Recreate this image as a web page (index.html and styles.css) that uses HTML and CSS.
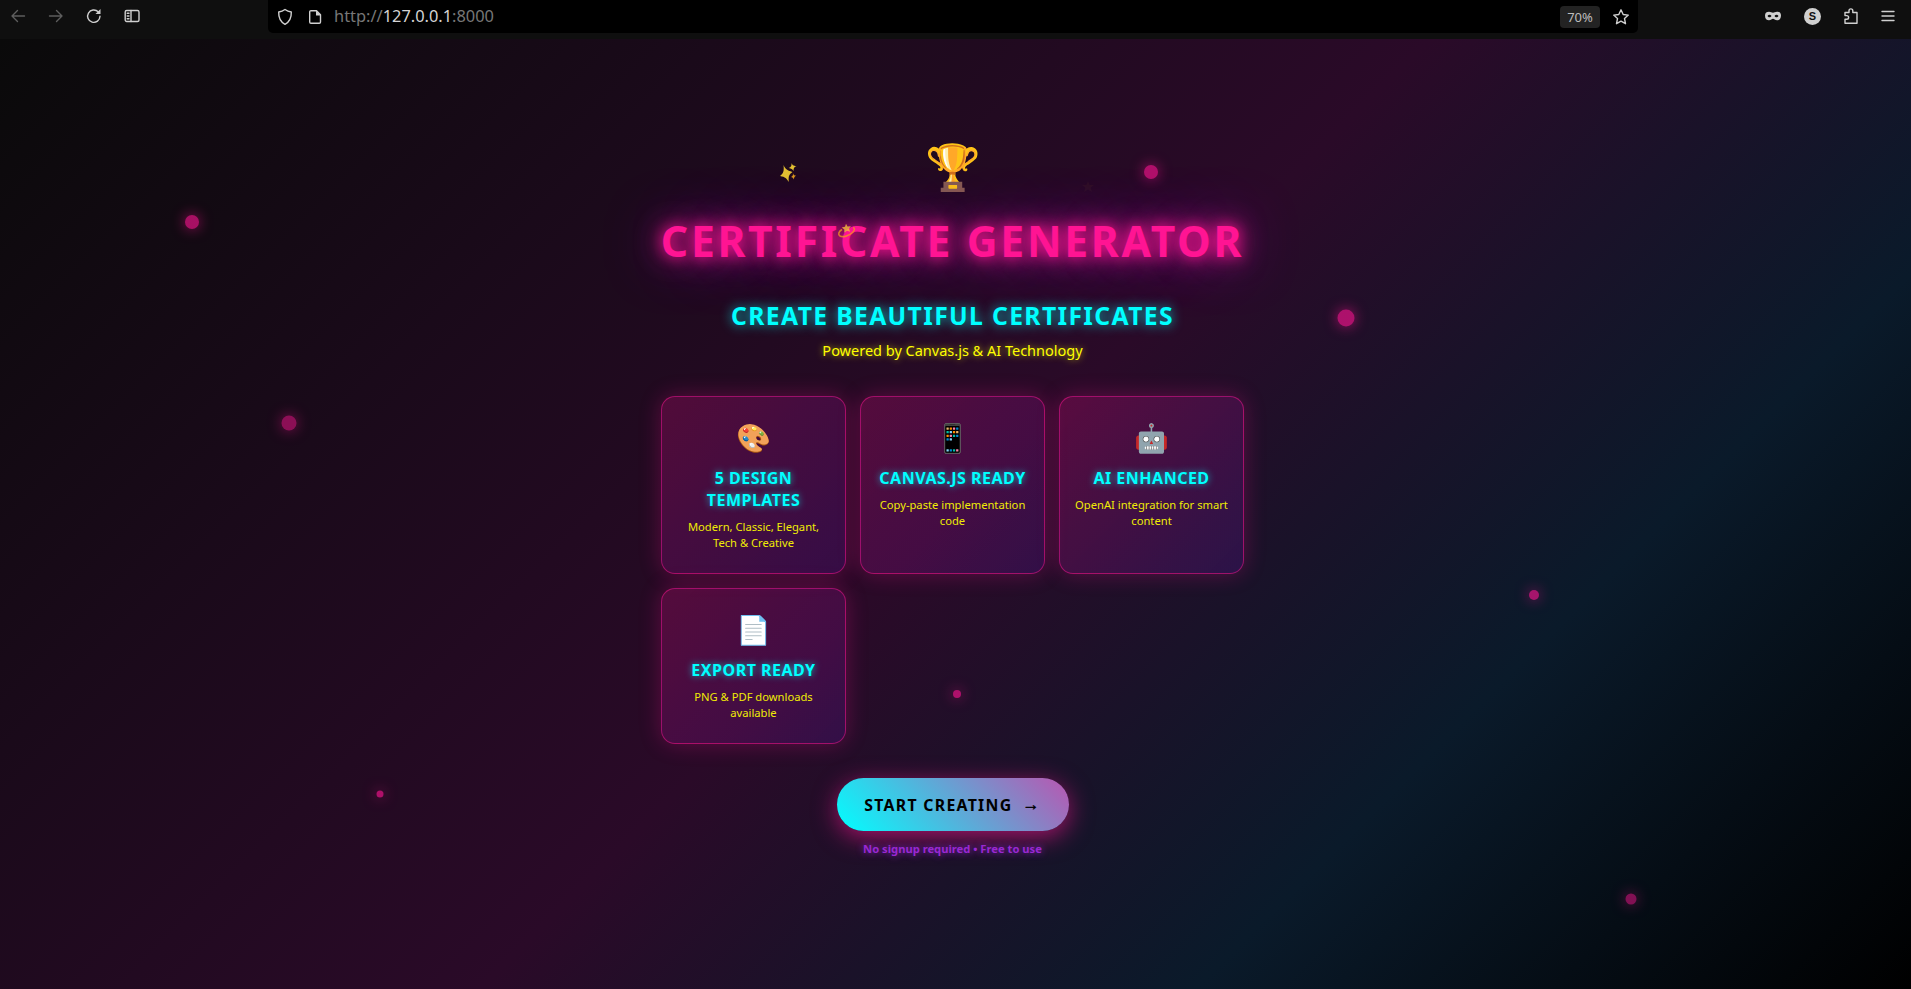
FILE: index.html
```html
<!DOCTYPE html>
<html lang="en">
<head>
<meta charset="utf-8">
<title>Certificate Generator</title>
<link rel="stylesheet" href="styles.css">
</head>
<body>
<header class="toolbar">
  <div class="nav">
    <svg class="dim" width="16" height="16" viewBox="0 0 16 16"><path d="M14.500 8H2M7.500 2.500L2 8l5.500 5.500"/></svg>
    <svg class="dim" width="16" height="16" viewBox="0 0 16 16"><path d="M1.500 8H14M8.500 2.500L14 8l-5.500 5.500"/></svg>
    <svg width="16" height="16" viewBox="0 0 16 16"><path d="M14 8.300A6.200 6.200 0 1 1 12.200 3.800"/><path class="solid" d="M14.500 1v5h-5z"/></svg>
    <svg width="16" height="16" viewBox="0 0 16 16"><rect x="1.200" y="2.500" width="13.800" height="11" rx="1.500"/><path d="M7 2.500v11M3.200 5.200h1.800M3.200 8h1.800M3.200 10.800h1.800"/></svg>
  </div>
  <div class="urlbar">
    <svg width="16" height="18" viewBox="0 0 16 18"><path d="M8 1.500C6.300 2.800 4.200 3.700 1.700 4c-.2 5.500 1.600 9.800 6.300 12.300C12.700 13.800 14.500 9.500 14.300 4 11.800 3.700 9.700 2.800 8 1.500z"/></svg>
    <svg width="16" height="16" viewBox="0 0 16 16"><path d="M4 1.700h5.500l4 4V13a1.300 1.300 0 0 1-1.300 1.300H4A1.300 1.300 0 0 1 2.700 13V3A1.300 1.300 0 0 1 4 1.700z"/><path class="solid" d="M9 1.500l5 5H9z"/></svg>
    <span class="url">http://<b>127.0.0.1</b>:8000</span>
    <span class="zoom">70%</span>
    <svg width="18" height="18" viewBox="0 0 18 18"><path d="M9 1.800l2.200 4.700 5.100.6-3.800 3.500 1 5.100L9 13.200l-4.500 2.500 1-5.100L1.700 7.100l5.100-.6z"/></svg>
  </div>
  <div class="tools">
    <svg width="18" height="16" viewBox="0 0 18 16"><path class="fill" fill-rule="evenodd" d="M1 7.500C1 4.600 2.800 3.700 5 3.700c1.800 0 2.700 1 4 1s2.200-1 4-1c2.200 0 4 .9 4 3.800 0 3.300-1.700 4.800-4 4.800-2 0-2.800-1.500-4-1.500s-2 1.500-4 1.500c-2.300 0-4-1.500-4-4.800zM3.500 8c1 1.800 3 1.800 4 0-1-1.800-3-1.800-4 0zM10.500 8c1 1.800 3 1.800 4 0-1-1.800-3-1.800-4 0z"/></svg>
    <span class="account">S</span>
    <svg width="16" height="18" viewBox="0 0 16 18"><path d="M2 16.200v-4h1.800a1.800 1.800 0 0 0 0-3.600H2V5.500h4V3.800a1.900 1.900 0 0 1 3.800 0v1.700H14v10.700z"/></svg>
    <svg width="14" height="14" viewBox="0 0 14 14"><path d="M1 2.500h12M1 7h12M1 11.500h12"/></svg>
  </div>
</header>
<main class="page">
  <i class="dot d1"></i><i class="dot d2"></i><i class="dot d3"></i><i class="dot d4"></i>
  <i class="dot d5"></i><i class="dot d6"></i><i class="dot d7"></i><i class="dot d8"></i>
  <div class="hero">
    <div class="trophy">🏆</div>
    <h1>CERTIFICATE GENERATOR</h1>
    <h2>CREATE BEAUTIFUL CERTIFICATES</h2>
    <p class="powered">Powered by Canvas.js &amp; AI Technology</p>
    <section class="cards">
      <article class="card"><div class="icon">🎨</div><h3>5 DESIGN TEMPLATES</h3><p>Modern, Classic, Elegant, Tech &amp; Creative</p></article>
      <article class="card"><div class="icon">📱</div><h3>CANVAS.JS READY</h3><p>Copy-paste implementation code</p></article>
      <article class="card"><div class="icon">🤖</div><h3>AI ENHANCED</h3><p>OpenAI integration for smart content</p></article>
      <article class="card"><div class="icon">📄</div><h3>EXPORT READY</h3><p>PNG &amp; PDF downloads available</p></article>
    </section>
    <button class="start"><span>START CREATING</span><span class="arrow">→</span></button>
    <p class="note">No signup required • Free to use</p>
  </div>
  <svg class="spark s1" width="17" height="20" viewBox="0 0 17 20">
    <path fill="#fdd835" d="M3.500 2C5.500 6 6.500 7.300 12.500 9 9 11.500 8.300 13 8.800 19 6.500 15.500 5.500 14 0 13 3.500 10.500 4.200 8 3.500 2z"/>
    <path fill="#fdd835" d="M11.500 0c.8 2.200 1.700 2.800 5 3-2.300 1-2.900 1.900-3 5C12.300 6.200 11.500 5.500 8.700 5 11 4 11.700 3 11.500 0z"/>
    <path fill="#f4a81d" d="M13 10.200c.5 1.600 1 2.200 3.200 2.500-1.600.7-2.200 1.600-2.300 3.900-.7-1.700-1.300-2.300-3-2.500C12.600 13.300 13 12.400 13 10.200z"/>
  </svg>
  <svg class="spark s2" width="20" height="16" viewBox="0 0 20 16">
    <path fill="none" stroke="#f59a1c" stroke-width="1.600" d="M5 6.500C1.500 8.500.8 11.500 3 13c3 1.700 9-.2 12.500-3.500 2.500-2.500 2.500-4.500.5-5"/>
    <path fill="#fdc83a" d="M9 .8l1.500 2.600 3.400-.2-2 2.600 1.400 3-3.300-1-2.700 2v-3.400L4.700 4.500l3.300-.7z"/>
  </svg>
  <svg class="spark s3" width="12" height="12" viewBox="0 0 12 12"><path fill="#fdd835" d="M6 0l1.700 4H12L8.600 6.700 10 11 6 8.500 2 11l1.400-4.300L0 4h4.300z"/></svg>
</main>
</body>
</html>
```
FILE: styles.css
```css
* { box-sizing: border-box; margin: 0; padding: 0; }
body {
  height: 989px;
  display: flex;
  flex-direction: column;
  overflow: hidden;
  background: #000;
  font-family: "Noto Sans", sans-serif;
}
.toolbar svg { fill: none; stroke: #d0d0d0; stroke-width: 1.4; stroke-linecap: round; stroke-linejoin: round; flex: none; }
.toolbar svg.dim { stroke: #5e5e5e; }
.toolbar svg .solid, .toolbar svg .fill { fill: #d0d0d0; stroke: none; }

/* browser toolbar */
.toolbar { height: 39px; flex: none; display: flex; background: #0f0f0f; }
.nav { width: 268px; height: 32px; padding-left: 10px; display: flex; align-items: center; gap: 22px; }
.urlbar {
  width: 1370px; height: 33px; padding: 0 8px 0 9px;
  display: flex; align-items: center; gap: 14px;
  background: #000; border-radius: 0 0 5px 5px;
}
.url { flex: 1; font-size: 16.4px; line-height: 31px; height: 33px; color: #777; margin-left: -3px; }
.url b { font-weight: 400; color: #d4d4d4; }
.zoom { width: 40px; height: 22px; line-height: 22px; border-radius: 4px; text-align: center; font-size: 13px; color: #bdbdbd; background: #232323; margin-right: -2px; }
.tools { flex: 1; height: 32px; padding-right: 16px; display: flex; align-items: center; justify-content: flex-end; gap: 22px; }
.account { width: 17px; height: 17px; border-radius: 50%; background: #d0d0d0; color: #111; font: bold 11px/17px "Liberation Sans", sans-serif; text-align: center; }

/* landing page */
.page {
  position: relative;
  height: 950px;
  padding-right: 6px;
  display: flex;
  justify-content: center;
  background: linear-gradient(135deg, #0a0a0a 0%, #1a0a1a 25%, #2a0a28 50%, #0a1a2a 75%, #000 100%);
}
.hero { width: 583px; display: flex; flex-direction: column; align-items: center; text-align: center; }
.trophy { margin-top: 95px; font-size: 44.8px; line-height: 64px; }
h1 {
  margin-top: 12px;
  font-size: 42.700px; line-height: 62px; letter-spacing: 2.65px; font-weight: 700; white-space: nowrap;
  color: #ff1493;
  text-shadow: 0 0 14px #ff1493, 0 0 28px #ff1493, 0 0 56px rgba(148, 40, 200, .9);
}
h2 {
  margin-top: 27px;
  font-size: 24.7px; line-height: 34px; letter-spacing: 1.35px; font-weight: 700; white-space: nowrap;
  color: #0ff;
  text-shadow: 0 0 12px rgba(0, 255, 255, .8);
}
.powered { margin-top: 5px; font-size: 14.5px; line-height: 24px; color: #ff0; text-shadow: 0 0 7px rgba(255, 255, 0, .7); }
.cards { width: 583px; margin-top: 34px; display: grid; grid-template-columns: repeat(3, 1fr); gap: 14px; }
.card {
  padding: 21px 15px 22px;
  border: 1px solid rgba(255, 20, 147, .5);
  border-radius: 14px;
  background: linear-gradient(135deg, rgba(255, 20, 147, .22), rgba(95, 25, 170, .24));
  box-shadow: 0 0 21px rgba(255, 20, 147, .27);
}
.icon { font-size: 28px; line-height: 38px; }
.card h3 { margin-top: 11px; font-size: 16px; line-height: 22px; letter-spacing: .5px; color: #0ff; text-shadow: 0 0 7px rgba(0, 255, 255, .7); }
.card p { margin-top: 8px; font-size: 11.2px; line-height: 16px; color: #ff0; opacity: .92; }
.start {
  width: 232px; height: 53px; margin-top: 34px;
  border: 0; border-radius: 27px;
  display: flex; align-items: center; justify-content: center; gap: 10px;
  font: bold 15.8px "Noto Sans", sans-serif; letter-spacing: 1.3px; color: #000;
  background: linear-gradient(45deg, #0ff, #ba55b0);
  box-shadow: 0 6px 24px rgba(255, 20, 147, .6);
}
.arrow { font-size: 17px; line-height: 20px; padding-bottom: 1px; -webkit-text-stroke: .4px #000; }
.note { margin-top: 10px; font-size: 11.2px; line-height: 16px; font-weight: 700; color: #9a28d2; text-shadow: 0 0 7px rgba(138, 43, 226, .8); }

/* floating decorations */
.dot { position: absolute; transform: translate(-50%, -50%); border-radius: 50%; background: #ff1493; box-shadow: 0 0 14px #ff1493; opacity: .63; }
.d1 { left: 192px; top: 183px; width: 14px; height: 14px; }
.d2 { left: 288.500px; top: 384px; width: 15px; height: 15px; opacity: .5; }
.d3 { left: 1151px; top: 133px; width: 14px; height: 14px; }
.d4 { left: 1345.700px; top: 279px; width: 17px; height: 17px; }
.d5 { left: 1534px; top: 555.500px; width: 10px; height: 10px; }
.d6 { left: 957px; top: 654.500px; width: 8px; height: 8px; }
.d7 { left: 380px; top: 754.500px; width: 7px; height: 7px; }
.d8 { left: 1630.500px; top: 860px; width: 11px; height: 11px; opacity: .5; }
.spark { position: absolute; }
.s1 { left: 780px; top: 124px; opacity: .88; }
.s2 { left: 837px; top: 184px; opacity: .75; }
.s3 { left: 1082px; top: 142px; opacity: .03; }
```
